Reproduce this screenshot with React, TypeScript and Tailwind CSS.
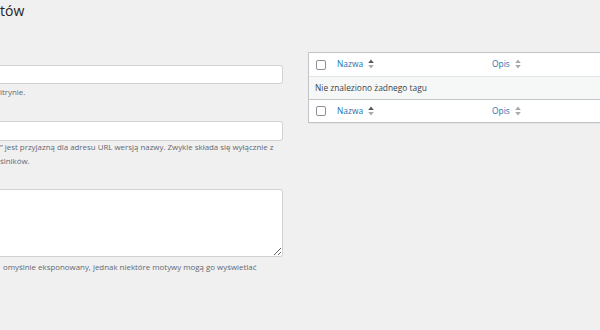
import React from "react";

function SortIcon({ active }: { active?: boolean }) {
    return (
        <svg width="6" height="10" viewBox="0 0 6 10" className="ml-[5px] shrink-0">
            <path d="M3 0.5 L5.8 4 L0.2 4 Z" fill={active ? "#50575e" : "#a7aaad"} />
            <path d="M3 9.5 L5.8 6 L0.2 6 Z" fill="#a7aaad" />
        </svg>
    );
}

function HeadRow({ top }: { top?: boolean }) {
    return (
        <div className={`flex items-center h-[23px] bg-white ${top ? "" : "border-t border-[#c3c4c7]"}`}>
            <div className="w-[28px] pl-[7px] flex items-center">
                <span className="block w-[10px] h-[10px] rounded-[2px] border border-[#8c8f94] bg-white" />
            </div>
            <div className="w-[155px] flex items-center text-[#2271b1]">
                Nazwa
                <SortIcon active />
            </div>
            <div className="flex items-center text-[#2271b1]">
                Opis
                <SortIcon />
            </div>
        </div>
    );
}

export default function App() {
    return (
        <div className="w-[600px] h-[330px] overflow-hidden bg-[#f0f0f1] font-['Open_Sans',sans-serif] text-[#3c434a]">
            {/* Page title (window is scrolled, only the tail shows) */}
            <h1 className="text-[14px] leading-[22px] font-normal text-[#1d2327]">tów</h1>

            <div className="flex gap-[25px] mt-[43px]">
                {/* Add tag form */}
                <div className="w-[283px] shrink-0 text-[7.9px]">
                    <input className="block w-full h-[19px] bg-white border border-[#d0d2d4] rounded-r-[3px] border-l-0 outline-none" />
                    <p className="mt-[2px] leading-[12px] text-[#646970] whitespace-nowrap">itrynie.</p>

                    <input className="block w-full h-[20px] mt-[23px] bg-white border border-[#d0d2d4] rounded-r-[3px] border-l-0 outline-none" />
                    <p className="leading-[13.5px] text-[#646970] whitespace-nowrap">
                        ” jest przyjazną dla adresu URL wersją nazwy. Zwykle składa się wyłącznie z
                        <br />
                        ślników.
                    </p>

                    <textarea className="block w-full h-[68px] mt-[21px] bg-white border border-[#d0d2d4] rounded-r-[3px] border-l-0 outline-none resize-y" />
                    <p className="mt-[4px] pl-[3px] leading-[12px] text-[#646970] whitespace-nowrap">
                        omyślnie eksponowany, jednak niektóre motywy mogą go wyświetlać
                    </p>
                </div>

                {/* Tags table */}
                <div className="w-[292px] shrink-0 -mt-[13px] self-start">
                    <div className="border border-r-0 border-[#c3c4c7] bg-white text-[8.4px] shadow-[0_1px_1px_rgba(0,0,0,0.04)]">
                        <HeadRow top />
                        <div className="h-[23px] flex items-center px-[6px] bg-[#f6f7f7] border-t border-[#e4e5e7] text-[#3c434a]">
                            Nie znaleziono żadnego tagu
                        </div>
                        <HeadRow />
                    </div>
                </div>
            </div>
        </div>
    );
}
